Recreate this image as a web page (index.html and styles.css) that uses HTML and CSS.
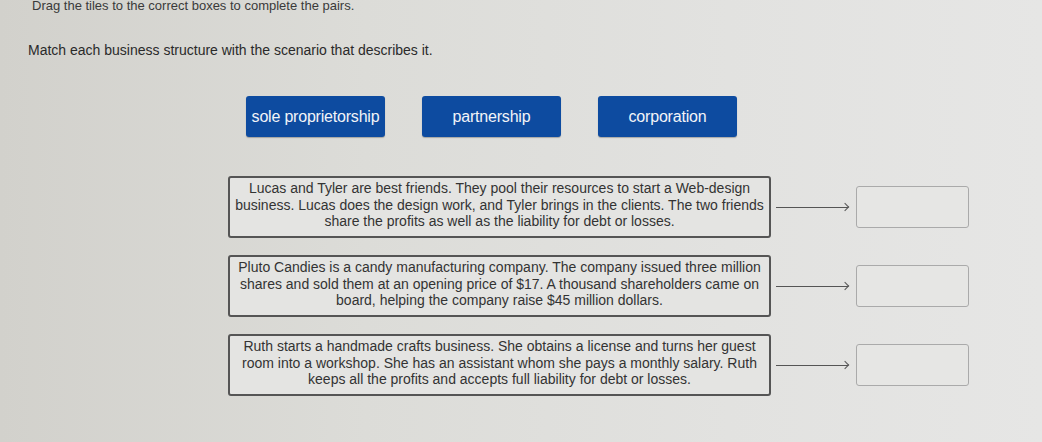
FILE: index.html
```html
<!DOCTYPE html>
<html lang="en">
<head>
<meta charset="utf-8">
<title>Business structures</title>
<link rel="stylesheet" href="styles.css">
</head>
<body>
<main class="page">
  <p class="hint">Drag the tiles to the correct boxes to complete the pairs.</p>
  <p class="prompt">Match each business structure with the scenario that describes it.</p>

  <div class="tiles">
    <div class="tile">sole proprietorship</div>
    <div class="tile">partnership</div>
    <div class="tile">corporation</div>
  </div>

  <div class="pairs">
    <div class="pair">
      <div class="scenario">Lucas and Tyler are best friends. They pool their resources to start a Web-design business. Lucas does the design work, and Tyler brings in the clients. The two friends share the profits as well as the liability for debt or losses.</div>
      <div class="arrow"></div>
      <div class="slot"></div>
    </div>
    <div class="pair">
      <div class="scenario">Pluto Candies is a candy manufacturing company. The company issued three million shares and sold them at an opening price of $17. A thousand shareholders came on board, helping the company raise $45 million dollars.</div>
      <div class="arrow"></div>
      <div class="slot"></div>
    </div>
    <div class="pair">
      <div class="scenario">Ruth starts a handmade crafts business. She obtains a license and turns her guest room into a workshop. She has an assistant whom she pays a monthly salary. Ruth keeps all the profits and accepts full liability for debt or losses.</div>
      <div class="arrow"></div>
      <div class="slot"></div>
    </div>
  </div>
</main>
</body>
</html>
```

FILE: styles.css
```css
html, body {
  margin: 0;
  height: 100%;
}

body {
  font-family: "Liberation Sans", Arial, sans-serif;
  color: #2e2e2e;
  background: linear-gradient(90deg, #d2d1cc 0%, #dcdcd8 35%, #e2e2e0 70%, #e6e6e5 100%);
  overflow: hidden;
}

.page {
  padding-left: 28px;
}

.hint {
  margin: 0 0 0 4px;
  font-size: 13px;
  line-height: 12px;
  color: #3a3a3a;
}

.prompt {
  margin: 30px 0 0;
  font-size: 14px;
  line-height: 16px;
  color: #2a2a2a;
}

.tiles {
  display: flex;
  gap: 37px;
  margin: 38px 0 0 218px;
}

.tile {
  width: 139px;
  height: 41px;
  display: flex;
  align-items: center;
  justify-content: center;
  background: #0d4ba0;
  border-radius: 3px;
  color: #f2f4f8;
  font-size: 16px;
  letter-spacing: -0.2px;
  box-shadow: 0 1px 1px rgba(0, 0, 0, 0.25);
}

.pairs {
  display: flex;
  flex-direction: column;
  gap: 17px;
  margin: 39px 0 0 200px;
}

.pair {
  display: flex;
  align-items: center;
}

.scenario {
  box-sizing: border-box;
  width: 543px;
  height: 62px;
  padding: 2px 0 0;
  border: 2px solid #555;
  border-radius: 3px;
  background: #e4e4e2;
  font-size: 14px;
  line-height: 16.5px;
  text-align: center;
  color: #333;
}

.arrow {
  position: relative;
  width: 72px;
  height: 1px;
  margin-left: 5px;
  background: #555;
}

.arrow::after {
  content: "";
  position: absolute;
  right: 0;
  top: -3px;
  width: 5px;
  height: 5px;
  border-top: 1px solid #555;
  border-right: 1px solid #555;
  transform: rotate(45deg);
}

.slot {
  box-sizing: border-box;
  width: 113px;
  height: 42px;
  margin-left: 8px;
  border: 1px solid #aaa;
  border-radius: 3px;
  background: #e6e6e4;
}
```
